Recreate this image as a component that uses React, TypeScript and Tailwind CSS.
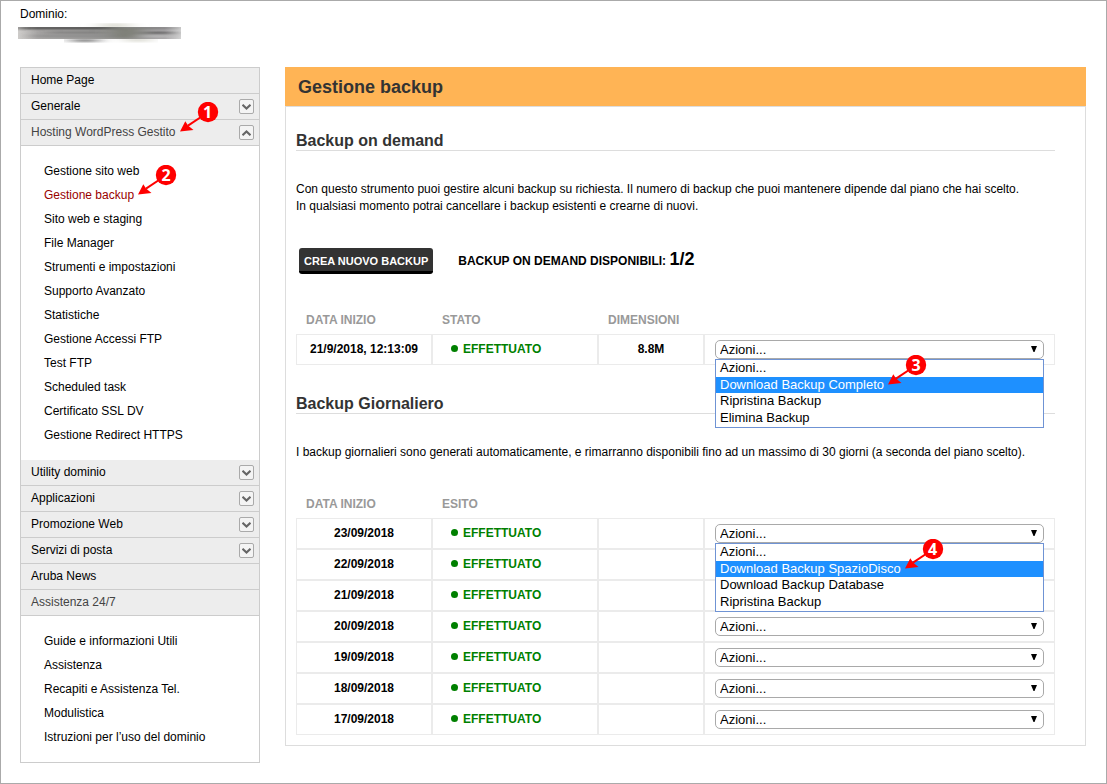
import { ReactNode } from 'react';

interface MenuSection {
  label: string;
  toggle?: 'open' | 'closed';
  active?: boolean;
  badge?: string;
  items?: string[];
}

const menu: MenuSection[] = [
  { label: 'Home Page' },
  { label: 'Generale', toggle: 'closed' },
  {
    label: 'Hosting WordPress Gestito',
    toggle: 'open',
    active: true,
    badge: '1',
    items: [
      'Gestione sito web',
      'Gestione backup',
      'Sito web e staging',
      'File Manager',
      'Strumenti e impostazioni',
      'Supporto Avanzato',
      'Statistiche',
      'Gestione Accessi FTP',
      'Test FTP',
      'Scheduled task',
      'Certificato SSL DV',
      'Gestione Redirect HTTPS',
    ],
  },
  { label: 'Utility dominio', toggle: 'closed' },
  { label: 'Applicazioni', toggle: 'closed' },
  { label: 'Promozione Web', toggle: 'closed' },
  { label: 'Servizi di posta', toggle: 'closed' },
  { label: 'Aruba News' },
  {
    label: 'Assistenza 24/7',
    active: true,
    items: [
      'Guide e informazioni Utili',
      'Assistenza',
      'Recapiti e Assistenza Tel.',
      'Modulistica',
      'Istruzioni per l’uso del dominio',
    ],
  },
];

const demandActions = ['Azioni...', 'Download Backup Completo', 'Ripristina Backup', 'Elimina Backup'];
const dailyActions = ['Azioni...', 'Download Backup SpazioDisco', 'Download Backup Database', 'Ripristina Backup'];

const dailyDates = [
  '23/09/2018',
  '22/09/2018',
  '21/09/2018',
  '20/09/2018',
  '19/09/2018',
  '18/09/2018',
  '17/09/2018',
];

// Numbered red marker whose arrow tip sits at the end of the text before it
function Marker({ n }: { n: string }) {
  return (
    <span className="pointer-events-none absolute bottom-1 left-full z-20 ml-1 block h-[33px] w-10">
      <svg viewBox="0 0 40 33" className="h-[33px] w-10" fill="red">
        <path d="M24 13 L8 23.600" stroke="red" strokeWidth="2" />
        <path d="M0 29.500 L5.300 19.300 L8 23.600 L13.500 28 Z" />
        <circle cx="28" cy="10" r="10.200" />
      </svg>
      <span className="absolute top-0 right-0 w-6 text-center font-['Open_Sans',sans-serif] text-base leading-5 font-bold text-white">
        {n}
      </span>
    </span>
  );
}

function Toggle({ state, label }: { state: 'open' | 'closed'; label: string }) {
  return (
    <button
      aria-label={label}
      aria-expanded={state === 'open'}
      className="flex size-[15px] items-center justify-center rounded-xs border border-[#aaa] bg-[#f4f4f4]"
    >
      <svg viewBox="0 0 9 6" className="h-[6px] w-[9px]" fill="none" stroke="#666" strokeWidth="2.200">
        <path d={state === 'open' ? 'M0.500 5.200 L4.500 1.500 L8.500 5.200' : 'M0.500 0.800 L4.500 4.500 L8.500 0.800'} />
      </svg>
    </button>
  );
}

function Sidebar() {
  return (
    <nav className="w-60 shrink-0 border border-[#ccc]">
      {menu.map((section) => (
        <div key={section.label}>
          <div className="flex h-[26px] items-center justify-between border-b border-[#ccc] bg-[#ededed] pr-[5px] pl-[10px]">
            <a href="#" className={`self-start leading-6 ${section.active ? 'text-[#444]' : 'text-black'}`}>
              <span className="relative">
                {section.label}
                {section.badge && <Marker n={section.badge} />}
              </span>
            </a>
            {section.toggle && <Toggle state={section.toggle} label={section.label} />}
          </div>
          {section.items && (
            <ul className="py-[13px] pl-[23px]">
              {section.items.map((item) => (
                <li key={item} className="leading-6">
                  {item === 'Gestione backup' ? (
                    <a href="#" className="relative text-[#900]">
                      {item}
                      <Marker n="2" />
                    </a>
                  ) : (
                    <a href="#">{item}</a>
                  )}
                </li>
              ))}
            </ul>
          )}
        </div>
      ))}
    </nav>
  );
}

function ActionSelect({ label, actions, marker }: { label: string; actions: string[]; marker?: string }) {
  return (
    <div className="relative text-[13px]">
      <select
        aria-label={label}
        className="block h-[19px] w-full appearance-none rounded-[5px] border border-[#a9a9a9] bg-white pl-1 leading-4 text-black"
      >
        {actions.map((action) => (
          <option key={action}>{action}</option>
        ))}
      </select>
      <svg viewBox="0 0 6 6" className="pointer-events-none absolute top-[6px] right-[7px] size-[6px]">
        <path d="M0 0 H6 L3.500 6 H2.500 Z" />
      </svg>
      {marker && (
        <ul className="absolute inset-x-0 top-full z-10 border border-[#6f93d4] bg-white text-black">
          {actions.map((action, i) => (
            <li key={action} className={`px-1 ${i === 1 ? 'h-4 bg-[#1e90ff] leading-4 text-white' : 'h-[17px] leading-4'}`}>
              <span className="relative">
                {action}
                {i === 1 && <Marker n={marker} />}
              </span>
            </li>
          ))}
        </ul>
      )}
    </div>
  );
}

function Cell({ children }: { children?: ReactNode }) {
  return <td className="h-[31px] border border-[#ebebeb] px-[10px] pb-[2px] text-center">{children}</td>;
}

function ActionCell({ children }: { children: ReactNode }) {
  return <td className="h-[31px] border border-[#ebebeb] px-[10px] text-left font-normal">{children}</td>;
}

function BackupTable({ headers, children }: { headers: string[]; children: ReactNode }) {
  return (
    <table className="w-full table-fixed border-separate border-spacing-0 font-bold">
      <colgroup>
        <col className="w-[136px]" />
        <col className="w-[166px]" />
        <col className="w-[106px]" />
        <col />
      </colgroup>
      <thead>
        <tr className="text-left text-[#999]">
          {headers.map((header, i) => (
            <th key={i} className="h-[22px] px-[10px] align-top">
              {header}
            </th>
          ))}
        </tr>
      </thead>
      <tbody>{children}</tbody>
    </table>
  );
}

function Done() {
  return (
    <span className="flex items-center gap-[5px] pl-2 text-[#008000]">
      <span className="size-[7px] rounded-full bg-[#008000]" />
      EFFETTUATO
    </span>
  );
}

function SectionTitle({ children }: { children: ReactNode }) {
  return <h2 className="border-b border-[#ddd] text-base leading-[19px] font-bold text-[#333]">{children}</h2>;
}

export default function App() {
  return (
    <div className="min-h-screen border border-[#aaa] bg-white pr-[20px] pb-[20px] pl-[19px] font-['Liberation_Sans',Arial,sans-serif] text-xs text-black">
      <header className="h-[66px] pt-1">
        <p className="leading-[18px]">Dominio:</p>
        <svg viewBox="0 0 164 20" className="-ml-[2px] h-5 w-[164px]" role="img" aria-label="Dominio oscurato">
          <defs>
            <filter id="smear" x="-10%" y="-50%" width="120%" height="200%">
              <feGaussianBlur stdDeviation="9 0.900" />
            </filter>
            <linearGradient id="strip">
              <stop offset="0" stopColor="#cfcdcb" />
              <stop offset="0.120" stopColor="#aaa8a7" />
              <stop offset="0.650" stopColor="#949492" />
              <stop offset="0.900" stopColor="#aaa8aa" />
              <stop offset="1" stopColor="#d4d4d4" />
            </linearGradient>
            <clipPath id="band">
              <path d="M0 4 H163 V16 H0 Z" />
            </clipPath>
          </defs>
          <g filter="url(#smear)">
            <rect x="82" y="0" width="30" height="5" fill="#e2e2da" />
            <rect x="54" y="16" width="26" height="3" fill="#777" />
            <rect x="108" y="15" width="24" height="4" fill="#deded6" />
          </g>
          <rect y="4" width="163" height="12" fill="url(#strip)" />
          <g clipPath="url(#band)">
            <g filter="url(#smear)">
              <rect x="0" y="4" width="96" height="2" fill="#333" />
              <rect x="100" y="4" width="56" height="2" fill="#777" />
              <rect x="28" y="9" width="60" height="1" fill="#555" />
              <rect x="16" y="12" width="80" height="2" fill="#888" />
              <rect x="96" y="5" width="24" height="10" fill="#7c7e74" />
              <rect x="128" y="9" width="26" height="2" fill="#444" />
              <rect x="124" y="12" width="34" height="2" fill="#bbb" />
            </g>
          </g>
        </svg>
      </header>

      <div className="flex items-start gap-[25px]">
        <Sidebar />

        <main className="min-w-0 flex-1">
          <h1 className="bg-[#ffb455] px-[13px] pt-[2px] text-lg leading-[37px] font-bold text-[#333]">
            Gestione backup
          </h1>
          <div className="border border-[#ddd] pt-6 pr-[30px] pb-[10px] pl-[10px]">
            <SectionTitle>Backup on demand</SectionTitle>
            <p className="mt-[30px] leading-[17px]">
              Con questo strumento puoi gestire alcuni backup su richiesta. Il numero di backup che puoi mantenere
              dipende dal piano che hai scelto.
              <br />
              In qualsiasi momento potrai cancellare i backup esistenti e crearne di nuovi.
            </p>

            <div className="mt-[33px] mb-[38px] flex items-start gap-[25px] pl-[3px] font-bold">
              <button className="h-[26px] rounded-[3px] border-b-3 border-black bg-[#333] px-[5px] pt-1 text-[11px] text-white">
                CREA NUOVO BACKUP
              </button>
              <p className="leading-[22px]">
                BACKUP ON DEMAND DISPONIBILI: <span className="text-lg leading-[22px]">1/2</span>
              </p>
            </div>

            <BackupTable headers={['DATA INIZIO', 'STATO', 'DIMENSIONI', '']}>
              <tr>
                <Cell>21/9/2018, 12:13:09</Cell>
                <Cell>
                  <Done />
                </Cell>
                <Cell>8.8M</Cell>
                <ActionCell>
                  <ActionSelect label="Azioni backup on demand" actions={demandActions} marker="3" />
                </ActionCell>
              </tr>
            </BackupTable>

            <div className="mt-[29px]">
              <SectionTitle>Backup Giornaliero</SectionTitle>
            </div>
            <p className="mt-[30px] mb-[35px] leading-[17px]">
              I backup giornalieri sono generati automaticamente, e rimarranno disponibili fino ad un massimo di 30
              giorni (a seconda del piano scelto).
            </p>

            <BackupTable headers={['DATA INIZIO', 'ESITO', '', '']}>
              {dailyDates.map((date, i) => (
                <tr key={date}>
                  <Cell>{date}</Cell>
                  <Cell>
                    <Done />
                  </Cell>
                  <Cell />
                  <ActionCell>
                    <ActionSelect
                      label={`Azioni backup ${date}`}
                      actions={dailyActions}
                      marker={i === 0 ? '4' : undefined}
                    />
                  </ActionCell>
                </tr>
              ))}
            </BackupTable>
          </div>
        </main>
      </div>
    </div>
  );
}
